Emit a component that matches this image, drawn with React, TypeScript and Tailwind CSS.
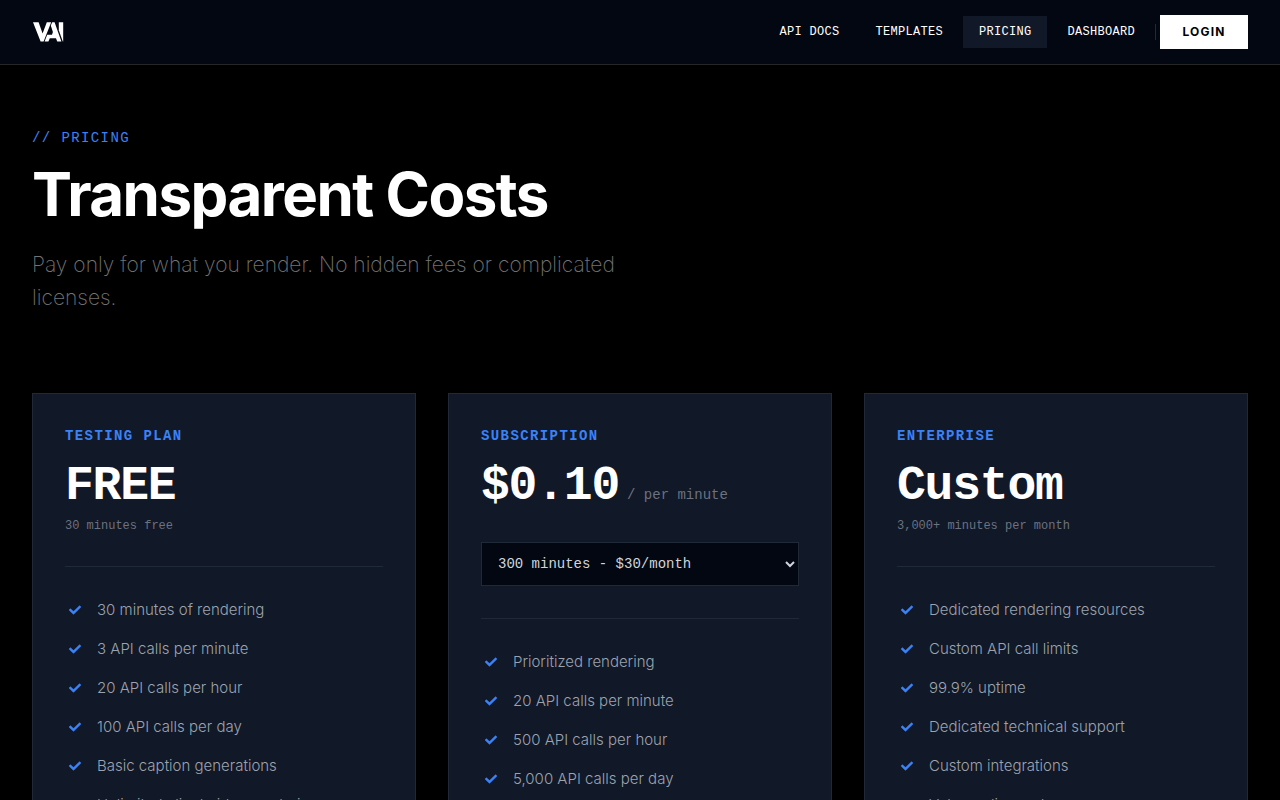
import type { ReactNode } from "react";
import { FaCheck } from "react-icons/fa";

const navItems = [
  { label: "API DOCS", href: "#docs" },
  { label: "TEMPLATES", href: "#templates" },
  { label: "PRICING", href: "#pricing", active: true },
  { label: "DASHBOARD", href: "#dashboard" },
];

const mono = "font-['Liberation_Mono',monospace]";

function Logo() {
  return (
    <svg viewBox="0 0 32 20" className="h-5 w-8" fill="#fff" aria-hidden="true">
      <path d="M1 0.2H6.6L10.6 11.4L14.8 0.2H19.2L11.6 19.6H8.6Z" />
      <path d="M20.2 0.2H22.6L29.4 19.6H25.2L24 16.2H17.8L16.4 19.6H12.6L15.2 12.8H20L20.9 10L18.8 3.6Z" />
      <path d="M26.8 0.2H31.2V19.6H30.8L26.8 8.2Z" />
    </svg>
  );
}

function Header() {
  return (
    <header className="fixed inset-x-0 top-0 z-10 border-b border-[#262626] bg-[#030712]">
      <div className="flex h-16 items-center justify-between px-8">
        <a href="#home" aria-label="VAI home">
          <Logo />
        </a>
        <nav className="flex items-center gap-1">
          {navItems.map((item) => (
            <a
              key={item.label}
              href={item.href}
              aria-current={item.active ? "page" : undefined}
              className={`${mono} px-4 py-2 text-xs tracking-wide text-white ${item.active ? "bg-[#111827]" : ""}`}
            >
              {item.label}
            </a>
          ))}
          <div className="h-4 w-px bg-[#1f2937]" />
          <button
            type="button"
            className="w-22 bg-white py-2 text-center font-['Inter',sans-serif] text-xs leading-[18px] font-bold tracking-widest text-black"
          >
            LOGIN
          </button>
        </nav>
      </div>
    </header>
  );
}

type PlanProps = {
  name: string;
  price: string;
  unit?: string;
  note?: string;
  features: string[];
  children?: ReactNode;
};

function PlanCard({ name, price, unit, note, features, children }: PlanProps) {
  return (
    <section className="border border-[#1f2937] bg-[#111827] p-8">
      <div className="border-b border-[#1f2937] pb-8">
        <h2 className={`${mono} mb-4 text-sm font-bold tracking-widest text-[#3b82f6]`}>{name}</h2>
        <p className={`${mono} flex items-baseline gap-2`}>
          <span className="text-5xl leading-none font-bold tracking-tight text-white">{price}</span>
          {unit && <span className="text-sm text-[#6b7280]">{unit}</span>}
        </p>
        {note && <p className={`${mono} mt-2 text-xs text-[#6b7280]`}>{note}</p>}
        {children}
      </div>
      <ul className="flex flex-col gap-[17px] pt-8">
        {features.map((feature) => (
          <li key={feature} className="flex items-center gap-3 text-[15px] leading-[22px] font-light text-[#9ca3af]">
            <span className="flex w-5 shrink-0 justify-center text-xs text-[#3b82f6]">
              <FaCheck />
            </span>
            {feature}
          </li>
        ))}
      </ul>
    </section>
  );
}

export default function App() {
  return (
    <div className="min-h-screen bg-black font-['Inter',sans-serif] text-white">
      <Header />
      <main className="px-8 pt-32 pb-16">
        <p className={`${mono} mb-4 text-sm tracking-widest text-[#3b82f6]`}>// PRICING</p>
        <h1 className="mb-6 text-6xl leading-none font-bold tracking-tight">Transparent Costs</h1>
        <p className="mb-[79px] max-w-[640px] text-[21px] leading-[33px] font-extralight text-[#737373]">
          Pay only for what you render. No hidden fees or complicated licenses.
        </p>
        <div className="grid gap-8 md:grid-cols-3">
          <PlanCard
            name="TESTING PLAN"
            price="FREE"
            note="30 minutes free"
            features={[
              "30 minutes of rendering",
              "3 API calls per minute",
              "20 API calls per hour",
              "100 API calls per day",
              "Basic caption generations",
              "Unlimited client video rendering",
            ]}
          />
          <PlanCard
            name="SUBSCRIPTION"
            price="$0.10"
            unit="/ per minute"
            features={[
              "Prioritized rendering",
              "20 API calls per minute",
              "500 API calls per hour",
              "5,000 API calls per day",
            ]}
          >
            <select
              aria-label="Monthly minutes"
              defaultValue="300"
              className={`${mono} mt-8 block w-full border border-[#1f2937] bg-[#030712] px-3 py-3 text-sm leading-[18px] text-[#d1d5db]`}
            >
              <option value="300">300 minutes - $30/month</option>
            </select>
          </PlanCard>
          <PlanCard
            name="ENTERPRISE"
            price="Custom"
            note="3,000+ minutes per month"
            features={[
              "Dedicated rendering resources",
              "Custom API call limits",
              "99.9% uptime",
              "Dedicated technical support",
              "Custom integrations",
              "Volume discounts",
            ]}
          />
        </div>
      </main>
    </div>
  );
}
